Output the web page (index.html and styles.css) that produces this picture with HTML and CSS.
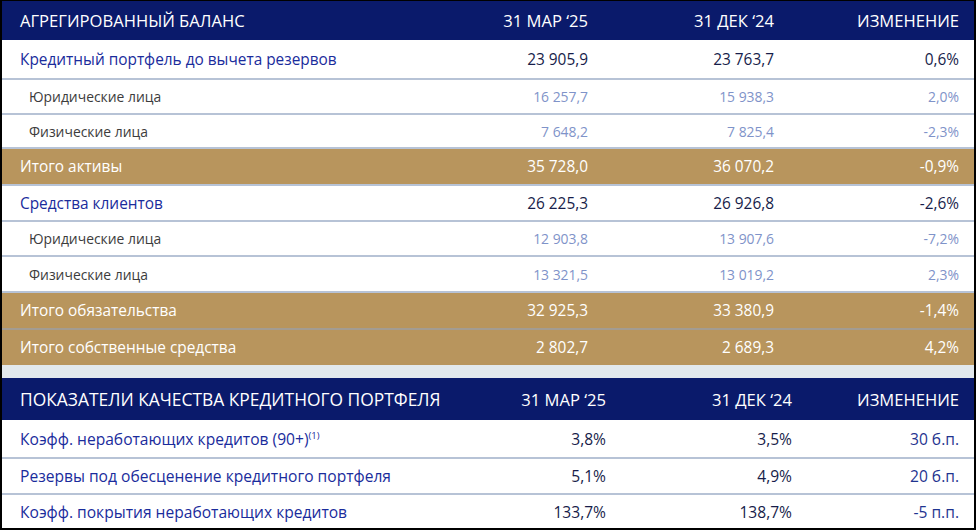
FILE: index.html
```html
<!DOCTYPE html>
<html lang="ru">
<head>
<meta charset="utf-8">
<title>Агрегированный баланс</title>
<link rel="stylesheet" href="styles.css">
</head>
<body>
<div class="frame">
  <div class="tbl t1">
    <div class="row head">
      <div class="c lab">АГРЕГИРОВАННЫЙ БАЛАНС</div>
      <div class="c num">31 МАР ‘25</div>
      <div class="c num">31 ДЕК ‘24</div>
      <div class="c num">ИЗМЕНЕНИЕ</div>
    </div>
    <div class="row main r1">
      <div class="c lab">Кредитный портфель до вычета резервов</div>
      <div class="c num">23 905,9</div>
      <div class="c num">23 763,7</div>
      <div class="c num">0,6%</div>
    </div>
    <div class="row sub">
      <div class="c lab">Юридические лица</div>
      <div class="c num">16 257,7</div>
      <div class="c num">15 938,3</div>
      <div class="c num">2,0%</div>
    </div>
    <div class="row sub short">
      <div class="c lab">Физические лица</div>
      <div class="c num">7 648,2</div>
      <div class="c num">7 825,4</div>
      <div class="c num">-2,3%</div>
    </div>
    <div class="row total">
      <div class="c lab">Итого активы</div>
      <div class="c num">35 728,0</div>
      <div class="c num">36 070,2</div>
      <div class="c num">-0,9%</div>
    </div>
    <div class="row main">
      <div class="c lab">Средства клиентов</div>
      <div class="c num">26 225,3</div>
      <div class="c num">26 926,8</div>
      <div class="c num">-2,6%</div>
    </div>
    <div class="row sub">
      <div class="c lab">Юридические лица</div>
      <div class="c num">12 903,8</div>
      <div class="c num">13 907,6</div>
      <div class="c num">-7,2%</div>
    </div>
    <div class="row sub tall">
      <div class="c lab">Физические лица</div>
      <div class="c num">13 321,5</div>
      <div class="c num">13 019,2</div>
      <div class="c num">2,3%</div>
    </div>
    <div class="row total">
      <div class="c lab">Итого обязательства</div>
      <div class="c num">32 925,3</div>
      <div class="c num">33 380,9</div>
      <div class="c num">-1,4%</div>
    </div>
    <div class="row total total2">
      <div class="c lab">Итого собственные средства</div>
      <div class="c num">2 802,7</div>
      <div class="c num">2 689,3</div>
      <div class="c num">4,2%</div>
    </div>
  </div>
  <div class="spacer"></div>
  <div class="tbl t2">
    <div class="row head">
      <div class="c lab">ПОКАЗАТЕЛИ КАЧЕСТВА КРЕДИТНОГО ПОРТФЕЛЯ</div>
      <div class="c num">31 МАР ‘25</div>
      <div class="c num">31 ДЕК ‘24</div>
      <div class="c num">ИЗМЕНЕНИЕ</div>
    </div>
    <div class="row kpi r1">
      <div class="c lab">Коэфф. неработающих кредитов (90+)<sup>(1)</sup></div>
      <div class="c num">3,8%</div>
      <div class="c num">3,5%</div>
      <div class="c num chg">30 б.п.</div>
    </div>
    <div class="row kpi">
      <div class="c lab">Резервы под обесценение кредитного портфеля</div>
      <div class="c num">5,1%</div>
      <div class="c num">4,9%</div>
      <div class="c num chg">20 б.п.</div>
    </div>
    <div class="row kpi last">
      <div class="c lab">Коэфф. покрытия неработающих кредитов</div>
      <div class="c num">133,7%</div>
      <div class="c num">138,7%</div>
      <div class="c num chg">-5 п.п.</div>
    </div>
  </div>
</div>
</body>
</html>
```
FILE: styles.css
```css
html, body {
  margin: 0;
  padding: 0;
  background: #ffffff;
}
body {
  font-family: "Open Sans", "Noto Sans", "DejaVu Sans", sans-serif;
  width: 976px;
  height: 530px;
  overflow: hidden;
}
.frame {
  box-sizing: border-box;
  width: 976px;
  height: 530px;
  border-style: solid;
  border-color: #000;
  border-width: 1px 2px 2px 2px;
  display: flex;
  flex-direction: column;
}
.tbl {
  display: flex;
  flex-direction: column;
}
.t2 {
  flex: 1;
}
.row {
  display: grid;
  align-items: center;
  box-sizing: border-box;
}
.t1 .row {
  grid-template-columns: 418px 168px 186px 200px;
}
.t2 .row {
  grid-template-columns: 436px 168px 186px 182px;
}
.c {
  white-space: nowrap;
}
.lab {
  padding-left: 18px;
}
.num {
  text-align: right;
}
.row .num:last-child {
  padding-right: 15px;
}
.head {
  background: #0a1a6b;
  color: #ffffff;
  font-size: 16.6px;
  height: 39px;
}
.t2 .head {
  height: 42px;
}
.t2 .head .lab {
  font-size: 17.4px;
}
.main {
  height: 36px;
  border-top: 2px solid #b7c3d6;
  font-size: 15.4px;
  color: #171d4a;
}
.main.r1 {
  height: 38px;
  border-top: none;
}
.main .lab {
  color: #1a2c9c;
}
.sub {
  height: 35px;
  border-top: 2px solid #b7c3d6;
  font-size: 13.9px;
  color: #7f93c9;
}
.sub.short {
  height: 34px;
}
.sub.tall {
  height: 36px;
}
.sub .lab {
  color: #3c3c3c;
  padding-left: 27px;
}
.total {
  height: 37px;
  background: #b8955d;
  color: #ffffff;
  font-size: 15.4px;
  border-top: 2px solid #b7c3d6;
}
.total2 {
  border-top: 2px solid #a39c92;
}
.spacer {
  height: 13px;
  background: #e2e8ec;
}
.kpi {
  height: 36px;
  border-top: 2px solid #b7c3d6;
  font-size: 15.6px;
  color: #171d4a;
}
.kpi.r1 {
  border-top: none;
  height: 37px;
}
.kpi.last {
  flex: 1;
}
.kpi .lab {
  color: #1a2c9c;
}
.kpi .chg {
  color: #1f3490;
}
sup {
  font-size: 9.5px;
  vertical-align: 6px;
  line-height: 0;
}
```
